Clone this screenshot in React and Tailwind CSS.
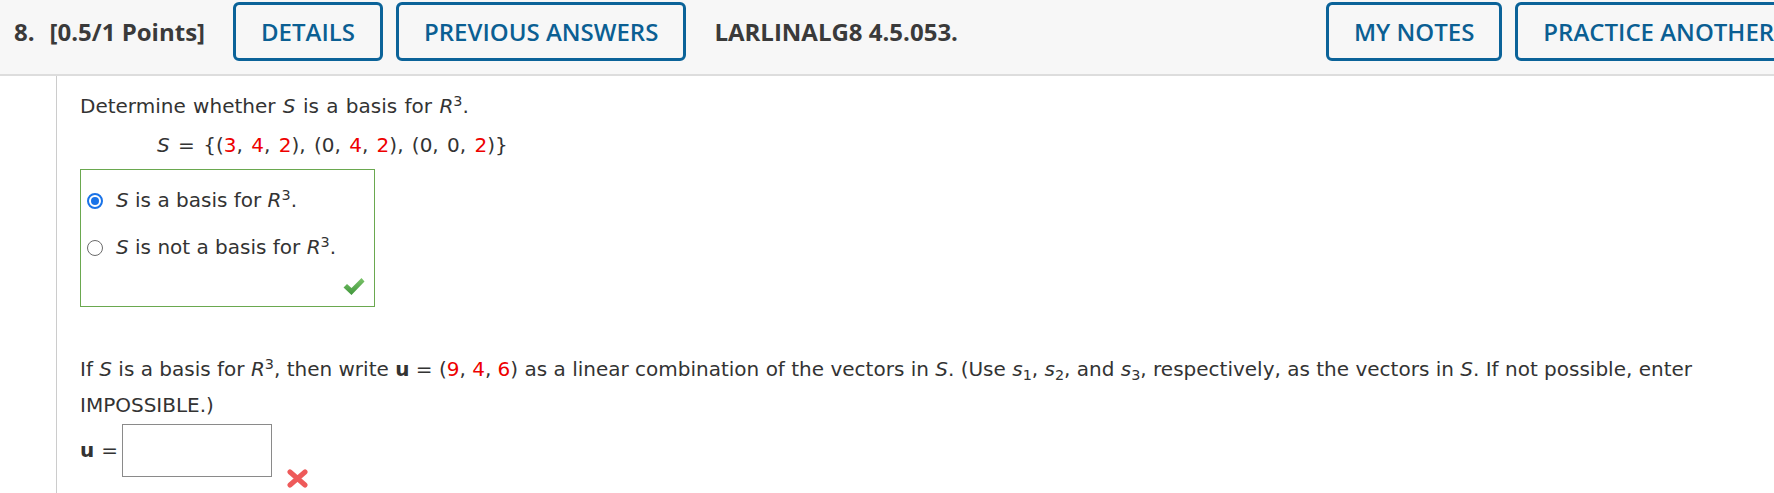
import React from 'react';

const Btn = ({ children, className = '' }) => (
  <div
    className={`h-[59px] px-[25px] flex items-center border-[3px] border-[#0b6399] rounded-[6px] text-[#0b5f93] font-semibold shrink-0 ${className}`}
  >
    {children}
  </div>
);

const R3 = () => (
  <>
    <i>R</i>
    <sup className="text-[0.72em]">3</sup>
  </>
);

const Red = ({ children }) => <span className="text-[#ee0000]">{children}</span>;

const CheckMark = () => (
  <svg width="22" height="19" viewBox="0 0 22 19">
    <defs>
      <linearGradient id="ck" x1="0" y1="0" x2="0" y2="1">
        <stop offset="0" stopColor="#7cc46a" />
        <stop offset="1" stopColor="#3f963b" />
      </linearGradient>
    </defs>
    <path d="M0.5 10.5 L4 7 L8.5 11 L18.5 1 L21.5 4.5 L8.5 18 Z" fill="url(#ck)" />
  </svg>
);

const CrossMark = () => (
  <svg width="21" height="19" viewBox="0 0 21 19">
    <path d="M3 3 L18 16 M18 3 L3 16" stroke="#ee5a5a" strokeWidth="5" strokeLinecap="round" />
  </svg>
);

const Radio = ({ checked }) =>
  checked ? (
    <span className="w-[16px] h-[16px] rounded-full border-[2px] border-[#1a73e8] bg-white flex items-center justify-center shrink-0">
      <span className="w-[8px] h-[8px] rounded-full bg-[#1a73e8]" />
    </span>
  ) : (
    <span className="w-[16px] h-[16px] rounded-full border-[1.5px] border-[#6b6b6b] bg-white shrink-0" />
  );

export default function App() {
  return (
    <div className="w-full h-[493px] overflow-hidden bg-white">
      {/* header */}
      <div
        className="h-[76px] bg-[#f7f7f7] border-b-2 border-[#dddddd] flex items-start pt-[2px] pl-[14px] whitespace-nowrap overflow-hidden text-[24px]"
        style={{ fontFamily: '"Open Sans", sans-serif' }}
      >
        <div className="h-[59px] flex items-center font-bold text-[#3a3a3a] shrink-0">
          <span>8.</span>
          <span className="ml-[15px]">[0.5/1 Points]</span>
        </div>
        <Btn className="ml-[28px]">DETAILS</Btn>
        <Btn className="ml-[13px]">PREVIOUS ANSWERS</Btn>
        <div className="ml-[28px] h-[59px] flex items-center font-bold text-[#3a3a3a] shrink-0">
          LARLINALG8 4.5.053.
        </div>
        <Btn className="ml-[368px]">MY NOTES</Btn>
        <Btn className="ml-[13px]">PRACTICE ANOTHER</Btn>
      </div>

      {/* body */}
      <div className="flex h-[417px]">
        <div className="w-[57px] border-r border-[#cccccc] shrink-0" />
        <div
          className="pl-[23px] pt-[11px] text-[20px] leading-[39px] text-[#333333]"
          style={{ fontFamily: '"DejaVu Sans", Verdana, sans-serif' }}
        >
          <div className="[word-spacing:1px]">
            Determine whether <i>S</i> is a basis for <R3 />.
          </div>
          <div className="pl-[77px] [word-spacing:2px]">
            <i>S</i> = {'{'}(<Red>3</Red>, <Red>4</Red>, <Red>2</Red>), (0, <Red>4</Red>, <Red>2</Red>), (0, 0, <Red>2</Red>){'}'}
          </div>

          <div className="mt-[4px] w-[295px] border border-[#6aa84f] pt-[7px] pb-[10px]">
            <div className="h-[47px] flex items-center pl-[6px] gap-[13px]">
              <Radio checked />
              <span>
                <i>S</i> is a basis for <R3 />.
              </span>
            </div>
            <div className="h-[47px] flex items-center pl-[6px] gap-[13px]">
              <Radio />
              <span>
                <i>S</i> is not a basis for <R3 />.
              </span>
            </div>
            <div className="flex justify-end pr-[9px] mt-[6px]">
              <CheckMark />
            </div>
          </div>

          <div className="mt-[44px] leading-[36px] whitespace-nowrap">
            If <i>S</i> is a basis for <R3 />, then write <b>u</b> = (<Red>9</Red>, <Red>4</Red>, <Red>6</Red>) as a
            linear combination of the vectors in <i>S</i>. (Use <i>s</i>
            <sub className="text-[0.72em]">1</sub>, <i>s</i>
            <sub className="text-[0.72em]">2</sub>, and <i>s</i>
            <sub className="text-[0.72em]">3</sub>, respectively, as the vectors in <i>S</i>. If not possible, enter
            <br />
            IMPOSSIBLE.)
          </div>

          <div className="mt-[1px] flex items-start">
            <div className="h-[53px] flex items-center w-[42px] shrink-0">
              <b>u</b>
              <span className="ml-[7px]">=</span>
            </div>
            <div className="w-[150px] h-[53px] border border-[#8a8a8a] bg-white shrink-0" />
            <div className="ml-[15px] mt-[45px]">
              <CrossMark />
            </div>
          </div>
        </div>
      </div>
    </div>
  );
}
